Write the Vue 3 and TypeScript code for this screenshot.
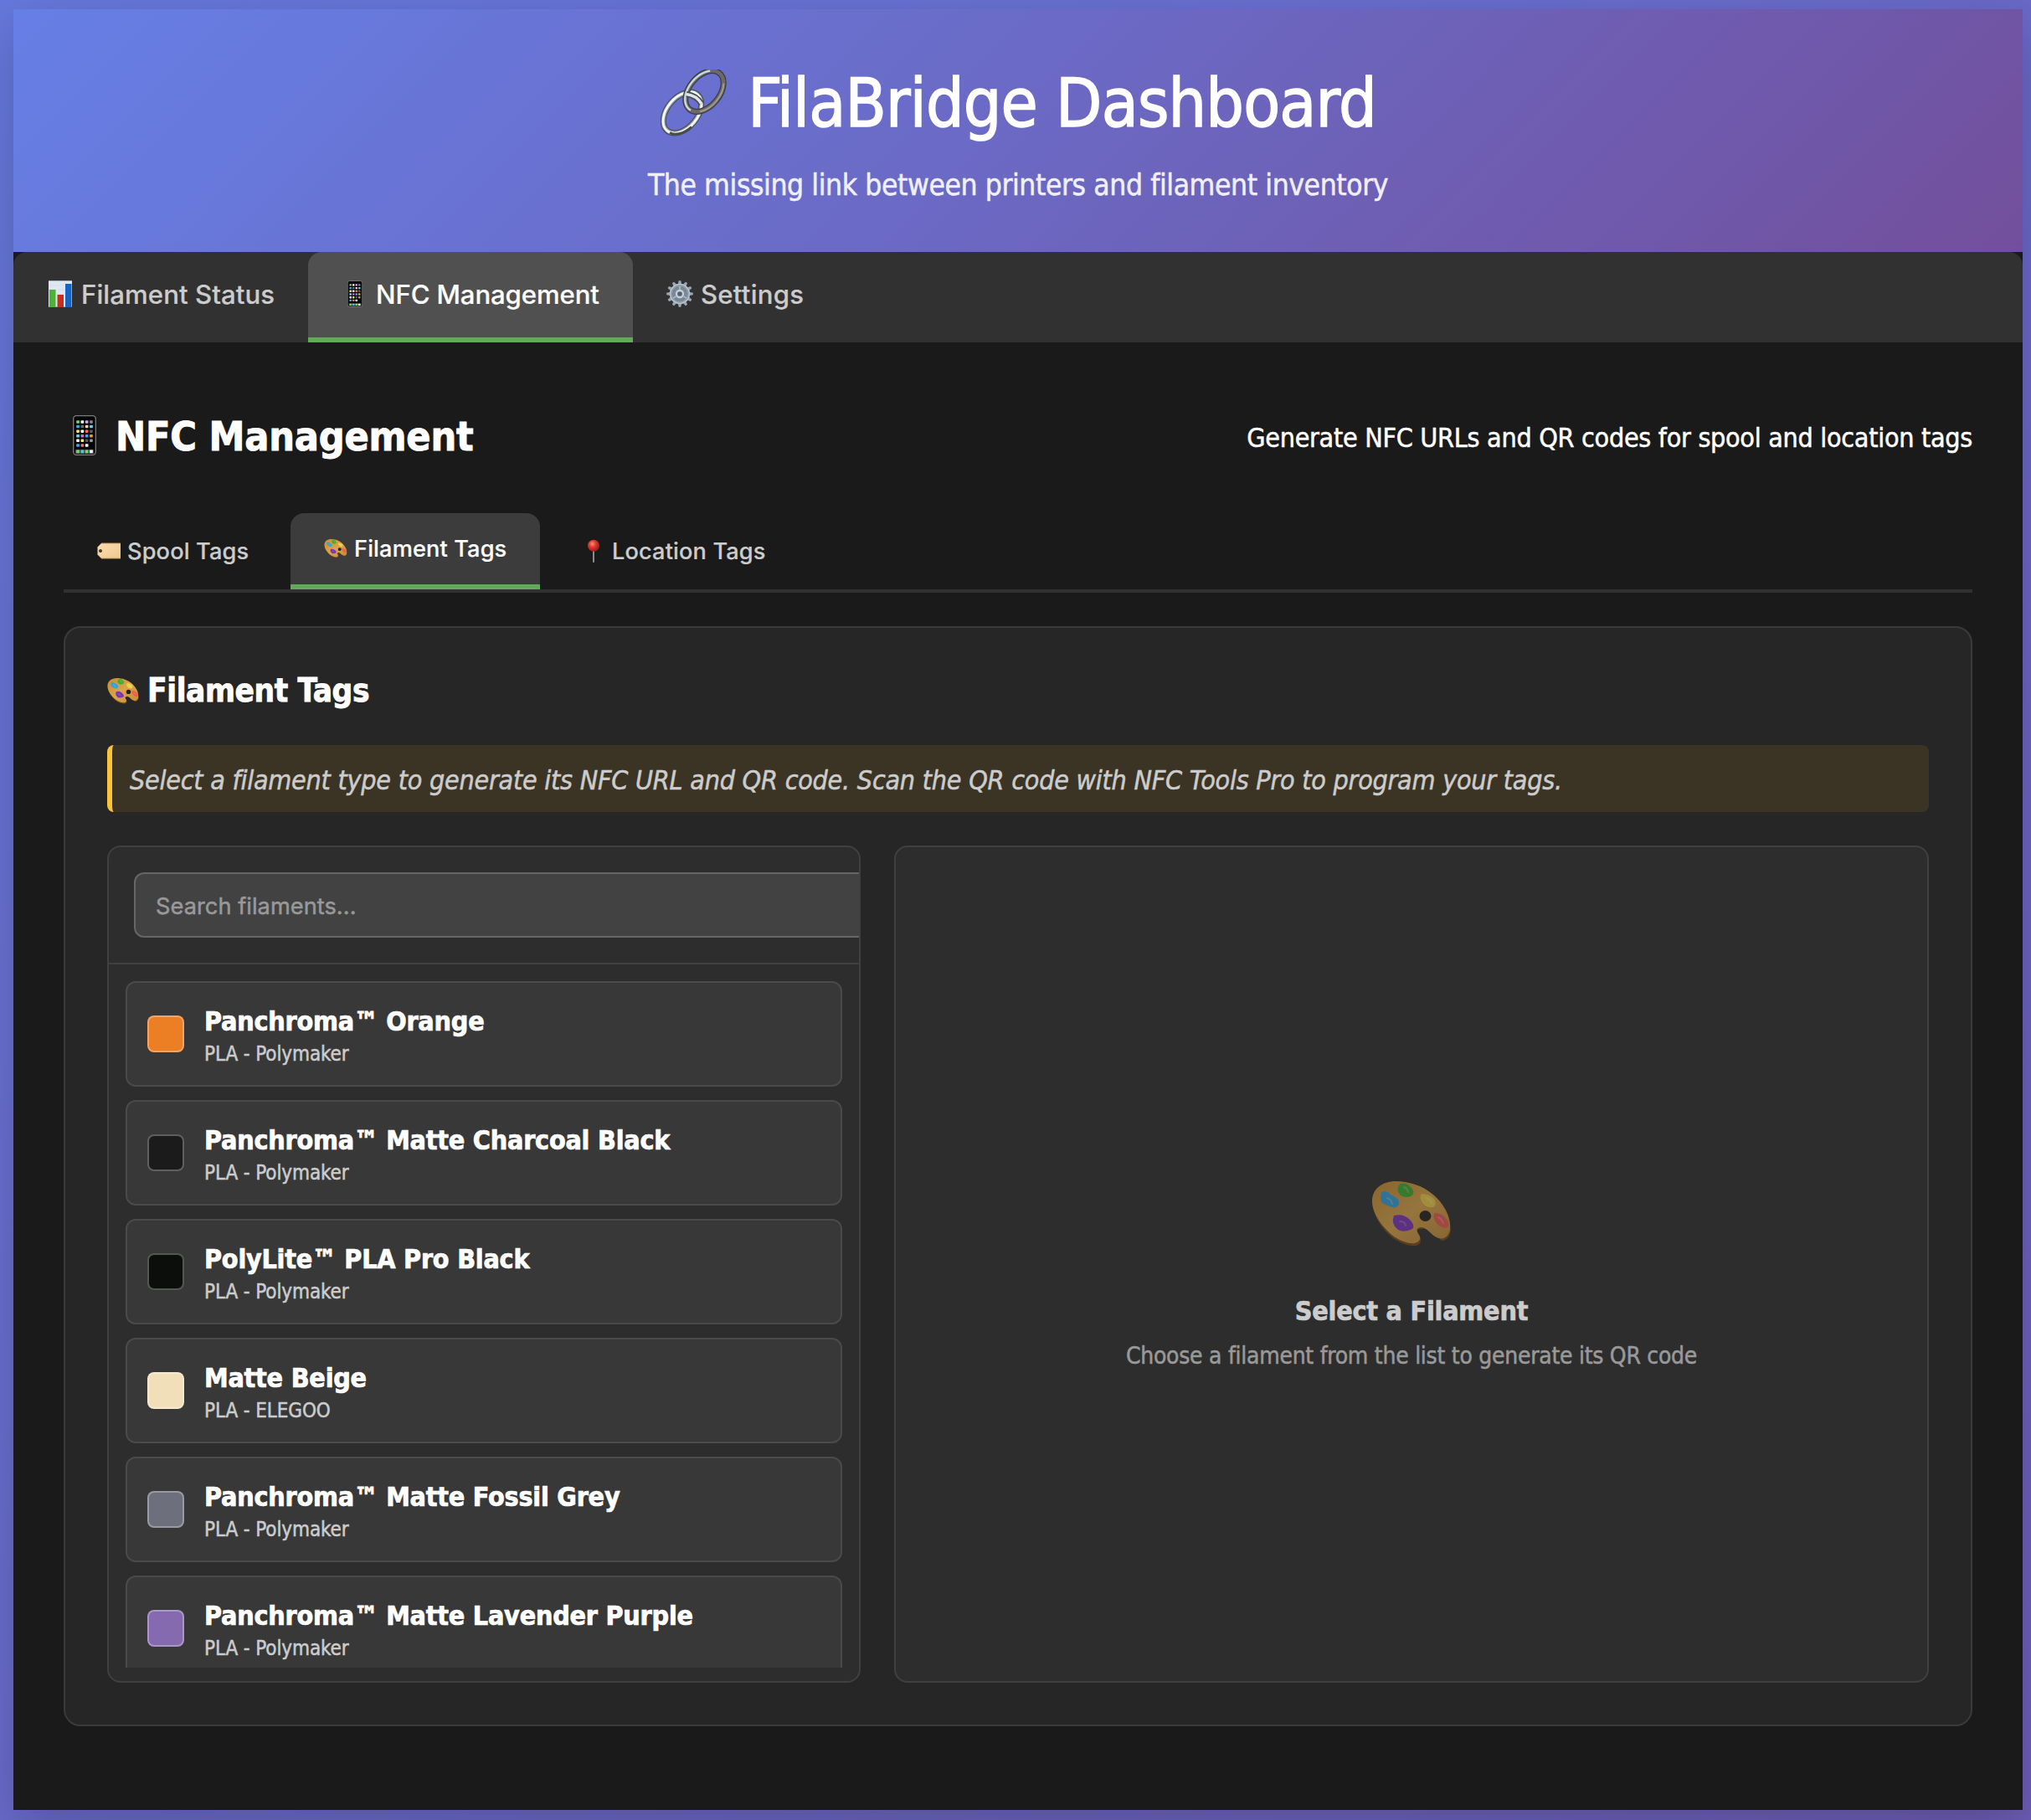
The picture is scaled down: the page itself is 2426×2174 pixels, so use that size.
<script setup lang="ts">
import { ref, computed } from 'vue'

interface Filament {
  name: string
  material: string
  vendor: string
  color: string
}

const filaments: Filament[] = [
  { name: 'Panchroma™ Orange', material: 'PLA', vendor: 'Polymaker', color: '#ec7f24' },
  { name: 'Panchroma™ Matte Charcoal Black', material: 'PLA', vendor: 'Polymaker', color: '#1b1b1b' },
  { name: 'PolyLite™ PLA Pro Black', material: 'PLA', vendor: 'Polymaker', color: '#0b0e0b' },
  { name: 'Matte Beige', material: 'PLA', vendor: 'ELEGOO', color: '#f0dfb9' },
  { name: 'Panchroma™ Matte Fossil Grey', material: 'PLA', vendor: 'Polymaker', color: '#6d707c' },
  { name: 'Panchroma™ Matte Lavender Purple', material: 'PLA', vendor: 'Polymaker', color: '#866ab0' },
]

const query = ref('')
const shown = computed(() =>
  filaments.filter((f) => f.name.toLowerCase().includes(query.value.toLowerCase())),
)

// App dots on the phone screen, row by row
const phoneApps: string[][] = [
  ['#6fdc6a', '#ffffff', '#d9a6f0', '#8a8a8a'],
  ['#3fa9f5', '#6a6a6a', '#f0d3b0', '#6ad0f5'],
  ['#f2ea5a', '#ffffff', '#f27058', '#5c5c5c'],
  ['#6adcf0', '#e65ae0', '#3fa9f5', '#f59a23'],
  ['#ffffff', '#f2ea5a', '#555555', '#9a9a9a'],
  ['#3fa9f5', '#f27058', '#ffffff', '#000000'],
]
const dockApps = ['#6fdc6a', '#4cc3f5', '#6fdc6a', '#ffffff']
const teeth = Array.from({ length: 12 }, (_, i) => i * 30)
</script>

<template>
  <div class="page">
    <svg class="defs" width="0" height="0" aria-hidden="true">
      <defs>
        <linearGradient id="wood" x1="0" y1="0" x2="1" y2="1">
          <stop offset="0" stop-color="#c98d2c" />
          <stop offset="0.5" stop-color="#dba54b" />
          <stop offset="1" stop-color="#c58a35" />
        </linearGradient>
        <radialGradient id="pinhead" cx="0.4" cy="0.35" r="0.6">
          <stop offset="0" stop-color="#ff8a7a" />
          <stop offset="0.5" stop-color="#d83a30" />
          <stop offset="1" stop-color="#a81f1c" />
        </radialGradient>
        <linearGradient id="tagpaper" x1="0" y1="0" x2="1" y2="1">
          <stop offset="0" stop-color="#fbdcae" />
          <stop offset="1" stop-color="#eec893" />
        </linearGradient>
        <symbol id="palette" viewBox="0 0 96 80">
          <path d="M2 28C3 53 26 76 48 79C57 80 60 76 59 70L54 60L66 58L84 73C91 73 95 66 95 59Z" fill="#7b4a17" />
          <path d="M29 2C13 2 1 11 1 26C1 40 12 56 27 68C36 74 46 77 52 76C57 75 60 71 57 66C54 62 53 58 59 57C66 57 70 64 76 68C84 73 92 70 94 60C96 46 87 29 74 18C61 7 45 2 29 2Z" fill="url(#wood)" />
          <ellipse cx="64.500" cy="43.500" rx="7" ry="6.500" fill="#26211c" />
          <path d="M34 5Q42 3 46 8Q53 14 49 19Q42 23 35 19Q30 13 32 9Z" fill="#3fae2f" />
          <path d="M12 15Q18 12 23 18Q34 22 33 29Q30 36 22 32Q11 29 11 23Z" fill="#35a0de" />
          <path d="M60 17Q69 17 75 23Q79 30 74 33Q66 34 62 29Q56 21 60 17Z" fill="#efcf45" />
          <path d="M27 43Q38 40 46 48Q53 55 49 59Q39 64 32 60Q23 53 27 43Z" fill="#7a34b8" />
          <path d="M76 40Q85 40 91 49Q95 57 88 58Q80 57 76 49Q73 42 76 40Z" fill="#ee5a50" />
          <path d="M39 9q4 1 5 6M19 22q5 2 6 7M66 22q5 2 6 6M34 50q6 0 7 5M80 45q4 2 6 7" fill="none" stroke="#fff" stroke-opacity="0.22" stroke-width="2" stroke-linecap="round" />
        </symbol>
        <symbol id="phone" viewBox="0 0 28 48">
          <rect x="0.700" y="0.700" width="26.600" height="46.600" rx="3.500" fill="#050505" stroke="#7d7d7d" stroke-width="1.300" />
          <template v-for="(row, r) in phoneApps" :key="r">
            <rect v-for="(c, i) in row" :key="i" :x="4.200 + i * 5.300" :y="6.200 + r * 5.600" width="3.700" height="3.500" rx="0.800" :fill="c" />
          </template>
          <rect x="3" y="40.800" width="22" height="5.200" fill="#4a4a4a" />
          <rect v-for="(c, i) in dockApps" :key="'d' + i" :x="4.200 + i * 5.300" y="41.500" width="3.700" height="3.700" rx="0.800" :fill="c" />
        </symbol>
      </defs>
    </svg>

    <div class="container">
      <header class="header">
        <h1>
          <svg class="chain" viewBox="0 0 80 80">
            <g fill="none" transform="translate(26 51.500) rotate(-50)">
              <ellipse rx="28" ry="18" stroke="#484c4f" stroke-width="7" />
              <ellipse rx="28" ry="18" stroke="#8d979d" stroke-width="5" />
              <ellipse rx="28.300" ry="18.300" stroke="#f4f8fa" stroke-width="2.800" />
              <path d="M-28 4A28 18 0 0 0 -6 19.500" stroke="#4a4a4a" stroke-width="3" />
            </g>
            <g fill="none" transform="translate(52.500 26) rotate(-50)">
              <ellipse rx="28" ry="18" stroke="#3c3c3c" stroke-width="7" />
              <ellipse rx="28" ry="18" stroke="#6c6a68" stroke-width="4.600" />
              <path d="M-28 2A28 18 0 0 1 23 -10.500" stroke="#c8dbe6" stroke-width="2.400" />
              <path d="M-22 11.500A28 18 0 0 0 22 11.500" stroke="#a39b93" stroke-width="2" />
            </g>
            <path d="M31 29.500Q43 31 49 41" fill="none" stroke="#484c4f" stroke-width="7" />
            <path d="M31 29.500Q43 31 49 41" fill="none" stroke="#dfe6ea" stroke-width="3.600" />
          </svg>
          <span>FilaBridge Dashboard</span>
        </h1>
        <p>The missing link between printers and filament inventory</p>
      </header>

      <nav class="tabs">
        <button class="tab tab-status">
          <svg class="tab-icon" viewBox="0 0 32 32">
            <rect x="2" y="0" width="28" height="32" fill="#dfe8f1" />
            <path d="M2 .5h28M2 31.500h28" stroke="#9fb0c0" />
            <path d="M2 6h28M2 11h28M2 16h28M2 21h28M2 26h28" stroke="#d2dde8" stroke-width="0.800" />
            <rect x="3" y="11" width="7.500" height="21" fill="#4db334" />
            <rect x="12.500" y="17" width="7.500" height="15" fill="#c5301a" />
            <rect x="22" y="4" width="7.500" height="28" fill="#1763c4" />
          </svg>
          <span>Filament Status</span>
        </button>
        <button class="tab tab-nfc active">
          <svg class="tab-icon" viewBox="0 0 32 32"><use href="#phone" x="6.700" y="0" width="18.600" height="32" /></svg>
          <span>NFC Management</span>
        </button>
        <button class="tab tab-settings">
          <svg class="tab-icon" viewBox="-16 -16 32 32">
            <path v-for="a in teeth" :key="a" d="M-2.300 -11L-1.300 -15.800H1.300L2.300 -11Z" fill="#9aa7b4" :transform="`rotate(${a})`" />
            <circle r="10.300" fill="none" stroke="#8998a6" stroke-width="4" />
            <circle r="11.300" fill="none" stroke="#bccad6" stroke-width="1.200" />
            <circle r="8.300" fill="#7d8994" />
            <circle r="4" fill="#56606a" stroke="#c3d2df" stroke-width="2.300" />
            <path d="M0 -5V-9M4.500 3L8 5M-4.500 3L-8 5" stroke="#a9b7c4" stroke-width="1.800" />
          </svg>
          <span>Settings</span>
        </button>
      </nav>

      <main class="content">
        <div class="section-header">
          <h2>
            <svg class="h2-icon" viewBox="0 0 50 48"><use href="#phone" x="11" y="0" width="28" height="48" /></svg>
            <span>NFC Management</span>
          </h2>
          <p>Generate NFC URLs and QR codes for spool and location tags</p>
        </div>

        <div class="subtabs">
          <button class="subtab">
            <svg class="sub-icon" viewBox="0 0 28 28">
              <path d="M5 5H28V23H5L0.500 18.500V9.500Z" fill="url(#tagpaper)" />
              <path d="M5 5H28M5 23H28" stroke="#c79a62" stroke-width="1" />
              <circle cx="4" cy="14" r="2" fill="#4a3320" />
            </svg>
            <span>Spool Tags</span>
          </button>
          <button class="subtab active">
            <svg class="sub-icon" viewBox="0 0 28 28"><use href="#palette" x="0" y="2.500" width="28" height="23" /></svg>
            <span>Filament Tags</span>
          </button>
          <button class="subtab subtab-location">
            <svg class="sub-icon" viewBox="0 0 28 28">
              <path d="M14 12V27" stroke="#8c8c8c" stroke-width="2" stroke-linecap="round" />
              <circle cx="14" cy="7.800" r="7" fill="url(#pinhead)" />
            </svg>
            <span>Location Tags</span>
          </button>
        </div>

        <section class="panel">
          <h3>
            <svg class="h3-icon" viewBox="0 0 38 38"><use href="#palette" x="0" y="4" width="38" height="32" /></svg>
            <span>Filament Tags</span>
          </h3>
          <p class="notice">Select a filament type to generate its NFC URL and QR code. Scan the QR code with NFC Tools Pro to program your tags.</p>

          <div class="columns">
            <div class="selector">
              <div class="search">
                <input v-model="query" type="text" placeholder="Search filaments..." />
              </div>
              <div class="list">
                <div v-for="f in shown" :key="f.name" class="item">
                  <span class="swatch" :style="{ backgroundColor: f.color }"></span>
                  <div class="info">
                    <div class="name">{{ f.name }}</div>
                    <div class="meta">{{ f.material }} - {{ f.vendor }}</div>
                  </div>
                </div>
              </div>
            </div>

            <div class="preview">
              <svg class="preview-icon" viewBox="0 0 96 80"><use href="#palette" width="96" height="80" /></svg>
              <h4>Select a Filament</h4>
              <p>Choose a filament from the list to generate its QR code</p>
            </div>
          </div>
        </section>
      </main>
    </div>
  </div>
</template>

<style>
body {
  margin: 0;
  background: #667adf;
}
</style>

<style scoped>
.page {
  box-sizing: border-box;
  width: 2426px;
  height: 2174px;
  padding: 11px 10px 12px 16px;
  overflow: hidden;
  background: linear-gradient(135deg, #6678dc 0%, #6d5cb6 100%);
  font-family: 'DejaVu Sans Condensed', 'DejaVu Sans', sans-serif;
  color: #fff;
  -webkit-text-stroke: 0.5px;
}
.page *,
.page *::before {
  box-sizing: border-box;
}
.defs {
  position: absolute;
}
h1, h2, h3, h4, p {
  margin: 0;
}
span, h1, h2, h3, h4, p {
  white-space: nowrap;
}
svg {
  display: block;
  flex: none;
}
.container {
  height: 2151px;
  background: #1a1a1a;
  box-shadow: 0 20px 60px rgba(0, 0, 0, 0.2);
}

.header {
  height: 290px;
  padding-top: 67px;
  background: linear-gradient(135deg, #667fe6 0%, #6b69c4 50%, #724f9c 100%);
}
.header h1 {
  display: flex;
  justify-content: center;
  gap: 24px;
  padding-left: 1px;
  font-size: 80px;
  font-weight: 400;
  line-height: 92px;
  letter-spacing: -0.85px;
  -webkit-text-stroke: 1.4px;
}
.chain {
  width: 80px;
  height: 80px;
  margin-top: 5px;
}
.header p {
  margin-top: 29px;
  font-size: 35.2px;
  line-height: 44px;
  letter-spacing: -0.43px;
  text-align: center;
  opacity: 0.9;
}

.tabs {
  display: flex;
  height: 108px;
  background: #313131;
  border-radius: 16px 16px 0 0;
}
button {
  display: flex;
  margin: 0;
  border: 0;
  background: none;
  color: #ccc;
  font-family: Inter, 'Liberation Sans', sans-serif;
  font-weight: 500;
  -webkit-text-stroke: 0.2px;
}
.tab {
  gap: 9px;
  padding: 31px 0 0 40px;
  border-radius: 16px 16px 0 0;
  font-size: 31.2px;
  line-height: 40px;
  letter-spacing: 0.05px;
}
.tab-status { width: 352px; }
.tab-nfc { width: 388px; letter-spacing: -0.15px; }
.tab-settings { width: 244px; letter-spacing: 0.2px; }
.tab-icon {
  width: 32px;
  height: 32px;
  margin-top: 3px;
}
.tab.active,
.subtab.active {
  color: #fff;
  border-radius: 16px 16px 0 0;
}
.tab.active {
  background: linear-gradient(#505050, #505050) top / 100% 102px no-repeat, #61aa57;
}

.content {
  padding: 84px 60px 0;
}
.section-header {
  display: flex;
  justify-content: space-between;
  height: 56px;
}
.section-header h2 {
  display: flex;
  gap: 12px;
  font-size: 48px;
  line-height: 56px;
  letter-spacing: -0.2px;
  -webkit-text-stroke: 0.9px;
}
.h2-icon {
  width: 50px;
  height: 48px;
  margin-top: 3px;
}
.section-header p {
  margin-top: 8px;
  font-size: 32px;
  line-height: 44px;
  letter-spacing: -0.3px;
}

.subtabs {
  display: flex;
  gap: 8px;
  height: 95px;
  margin-top: 64px;
  border-bottom: 4px solid #313131;
}
.subtab {
  width: 263px;
  height: 91px;
  padding: 28px 0 0 40px;
  gap: 8px;
  font-size: 27.2px;
  line-height: 36px;
  letter-spacing: 0.12px;
}
.subtab.active {
  width: 298px;
  padding-top: 25px;
  background: linear-gradient(#3c3c3c, #3c3c3c) top / 100% 85px no-repeat, #61aa57;
}
.subtab-location {
  padding-left: 42px;
}
.sub-icon {
  width: 28px;
  height: 28px;
  margin-top: 3px;
}

.panel {
  height: 1314px;
  margin-top: 40px;
  padding: 52px 50px 0;
  background: #262626;
  border: 2px solid #3a3a3a;
  border-radius: 20px;
}
.panel h3 {
  display: flex;
  gap: 10px;
  font-size: 38.4px;
  line-height: 46px;
  letter-spacing: -0.4px;
  -webkit-text-stroke: 0.8px;
}
.h3-icon {
  width: 38px;
  height: 38px;
  margin-top: 3px;
}
.notice {
  height: 80px;
  margin-top: 42px;
  padding: 20px 21px 16px;
  background: #3b3424;
  border-left: 6px solid #f9c43a;
  border-radius: 8px;
  color: #ccc;
  font-size: 32px;
  font-style: italic;
  line-height: 44px;
  letter-spacing: -0.25px;
}
.columns {
  display: flex;
  gap: 40px;
  height: 1000px;
  margin-top: 40px;
}
.selector,
.preview {
  background: #2d2d2d;
  border: 2px solid #404040;
  border-radius: 16px;
  overflow: hidden;
}
.selector {
  width: 900px;
  flex: none;
  display: flex;
  flex-direction: column;
}
.search {
  flex: none;
  height: 140px;
  padding: 30px;
  border-bottom: 2px solid #404040;
}
.search input {
  display: block;
  width: 896px;
  height: 78px;
  padding: 2px 24px 0;
  background: #424242;
  border: 2px solid #666;
  border-radius: 12px;
  color: #fff;
  font-family: Inter, 'Liberation Sans', sans-serif;
  font-size: 27.2px;
  letter-spacing: 0.05px;
}
.search input::placeholder {
  color: #999;
  opacity: 1;
}
.list {
  flex: none;
  height: 840px;
  padding: 20px 20px 0;
  overflow: hidden;
  display: flex;
  flex-direction: column;
  gap: 16px;
}
.item {
  flex: none;
  display: flex;
  align-items: center;
  gap: 24px;
  height: 126px;
  padding: 0 24px;
  background: #383838;
  border: 2px solid #4a4a4a;
  border-radius: 12px;
}
.swatch {
  flex: none;
  width: 44px;
  height: 44px;
  border: 2px solid rgba(255, 255, 255, 0.3);
  border-radius: 8px;
}
.info {
  padding-top: 5px;
}
.name {
  font-size: 32px;
  font-weight: 700;
  line-height: 40px;
  letter-spacing: -0.25px;
  -webkit-text-stroke: 0.7px;
}
.meta {
  margin-top: 3px;
  color: #ccc;
  font-size: 24px;
  line-height: 32px;
  letter-spacing: -0.1px;
}
.preview {
  flex: 1;
  display: flex;
  flex-direction: column;
  align-items: center;
  padding-top: 397px;
}
.preview-icon {
  width: 96px;
  height: 80px;
  opacity: 0.6;
}
.preview h4 {
  margin-top: 57px;
  color: #ccc;
  font-size: 32px;
  line-height: 40px;
  letter-spacing: -0.25px;
  -webkit-text-stroke: 0.7px;
}
.preview p {
  margin-top: 16px;
  color: #999;
  font-size: 28px;
  line-height: 36px;
  letter-spacing: -0.27px;
}
</style>
